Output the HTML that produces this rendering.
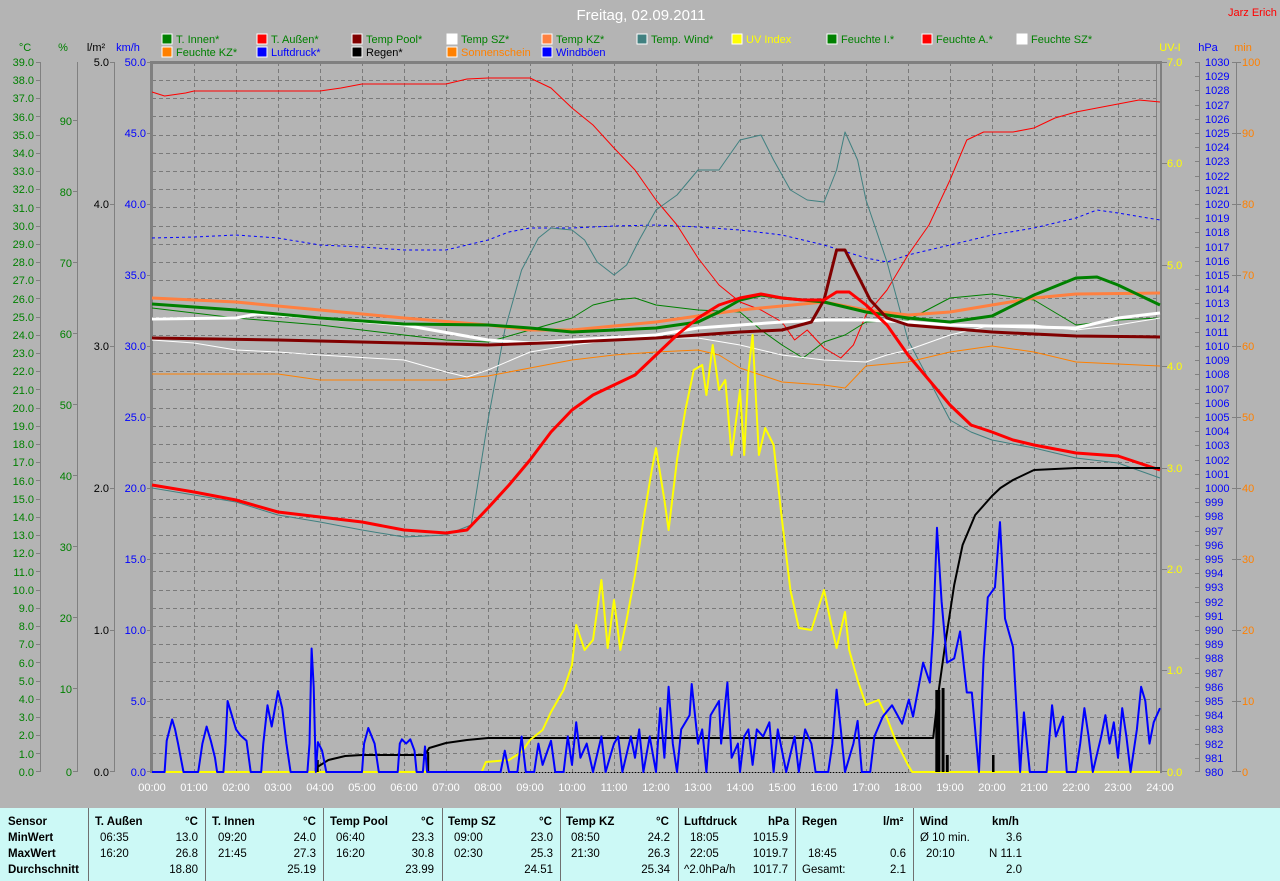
<!DOCTYPE html>
<html><head><meta charset="utf-8"><style>
html,body{margin:0;padding:0;background:#b4b4b4;width:1280px;height:881px;overflow:hidden}
svg{display:block;font-family:"Liberation Sans",sans-serif}
.tb{position:absolute;left:0;top:808px;width:1280px;height:73px;background:#ccf9f6;font-family:"Liberation Sans",sans-serif;font-size:11.5px;color:#000}
.tb div{position:absolute;white-space:nowrap}
.sep{position:absolute;top:0;width:1px;height:73px;background:#707070}
.b{font-weight:bold}
</style></head><body>
<svg width="1280" height="808" xmlns="http://www.w3.org/2000/svg">
<text x="641" y="20" fill="#fff" font-size="15" text-anchor="middle">Freitag, 02.09.2011</text>
<text x="1228" y="16" fill="#f00" font-size="11">Jarz Erich</text>
<g font-size="11">
<rect x="162" y="34" width="10" height="10" fill="#008000" stroke="#fff"/><text x="176" y="43" fill="#008000">T. Innen*</text>
<rect x="257" y="34" width="10" height="10" fill="#f00" stroke="#fff"/><text x="271" y="43" fill="#008000">T. Außen*</text>
<rect x="352" y="34" width="10" height="10" fill="#800000" stroke="#fff"/><text x="366" y="43" fill="#008000">Temp Pool*</text>
<rect x="447" y="34" width="10" height="10" fill="#fff" stroke="#fff"/><text x="461" y="43" fill="#008000">Temp SZ*</text>
<rect x="542" y="34" width="10" height="10" fill="#ff8040" stroke="#fff"/><text x="556" y="43" fill="#008000">Temp KZ*</text>
<rect x="637" y="34" width="10" height="10" fill="#408080" stroke="#fff"/><text x="651" y="43" fill="#008000">Temp. Wind*</text>
<rect x="732" y="34" width="10" height="10" fill="#ff0" stroke="#fff"/><text x="746" y="43" fill="#ff0">UV Index</text>
<rect x="827" y="34" width="10" height="10" fill="#008000" stroke="#fff"/><text x="841" y="43" fill="#008000">Feuchte I.*</text>
<rect x="922" y="34" width="10" height="10" fill="#f00" stroke="#fff"/><text x="936" y="43" fill="#008000">Feuchte A.*</text>
<rect x="1017" y="34" width="10" height="10" fill="#fff" stroke="#fff"/><text x="1031" y="43" fill="#008000">Feuchte SZ*</text>
<rect x="162" y="47" width="10" height="10" fill="#ff8000" stroke="#fff"/><text x="176" y="56" fill="#008000">Feuchte KZ*</text>
<rect x="257" y="47" width="10" height="10" fill="#00f" stroke="#fff"/><text x="271" y="56" fill="#00f">Luftdruck*</text>
<rect x="352" y="47" width="10" height="10" fill="#000" stroke="#fff"/><text x="366" y="56" fill="#000">Regen*</text>
<rect x="447" y="47" width="10" height="10" fill="#ff8000" stroke="#fff"/><text x="461" y="56" fill="#ff8000">Sonnenschein</text>
<rect x="542" y="47" width="10" height="10" fill="#00f" stroke="#fff"/><text x="556" y="56" fill="#00f">Windböen</text>
</g>
<g font-size="11">
<text x="25" y="51" fill="#008000" text-anchor="middle">°C</text>
<text x="63" y="51" fill="#008000" text-anchor="middle">%</text>
<text x="96" y="51" fill="#000" text-anchor="middle">l/m²</text>
<text x="128" y="51" fill="#00f" text-anchor="middle">km/h</text>
<text x="1170" y="51" fill="#ff0" text-anchor="middle">UV-I</text>
<text x="1208" y="51" fill="#00f" text-anchor="middle">hPa</text>
<text x="1243" y="51" fill="#ff8000" text-anchor="middle">min</text>
</g>
<g stroke="#808080" stroke-width="1">
<line x1="40.5" y1="62" x2="40.5" y2="772"/>
<line x1="77.5" y1="62" x2="77.5" y2="772"/>
<line x1="114.5" y1="62" x2="114.5" y2="772"/>
<line x1="1199.5" y1="62" x2="1199.5" y2="772"/>
<line x1="1236.5" y1="62" x2="1236.5" y2="772"/>
</g>
<g stroke="#7a7a7a" stroke-dasharray="4,3" stroke-width="1">
<path d="M152 80.5H1157M152 98.5H1157M152 116.5H1157M152 135.5H1157M152 153.5H1157M152 171.5H1157M152 189.5H1157M152 207.5H1157M152 226.5H1157M152 244.5H1157M152 262.5H1157M152 280.5H1157M152 298.5H1157M152 317.5H1157M152 335.5H1157M152 353.5H1157M152 371.5H1157M152 389.5H1157M152 408.5H1157M152 426.5H1157M152 444.5H1157M152 462.5H1157M152 480.5H1157M152 499.5H1157M152 517.5H1157M152 535.5H1157M152 553.5H1157M152 571.5H1157M152 590.5H1157M152 608.5H1157M152 626.5H1157M152 644.5H1157M152 662.5H1157M152 681.5H1157M152 699.5H1157M152 717.5H1157M152 735.5H1157M152 753.5H1157"/>
<path d="M194.5 62V772M236.5 62V772M278.5 62V772M320.5 62V772M362.5 62V772M404.5 62V772M446.5 62V772M488.5 62V772M530.5 62V772M572.5 62V772M614.5 62V772M656.5 62V772M698.5 62V772M740.5 62V772M782.5 62V772M824.5 62V772M866.5 62V772M908.5 62V772M950.5 62V772M992.5 62V772M1034.5 62V772M1076.5 62V772M1118.5 62V772"/>
</g>
<rect x="150" y="61" width="3" height="712" fill="#808080"/>
<rect x="150" y="61" width="1012" height="3" fill="#808080"/>
<rect x="1156" y="62" width="1" height="711" fill="#808080"/>
<rect x="1160" y="62" width="2" height="711" fill="#808080"/>
<line x1="150" y1="772.5" x2="1162" y2="772.5" stroke="#808080"/>
<g font-size="11" fill="#008000" text-anchor="end">
<text x="34" y="66">39.0</text><text x="34" y="84">38.0</text><text x="34" y="102">37.0</text><text x="34" y="121">36.0</text><text x="34" y="139">35.0</text><text x="34" y="157">34.0</text><text x="34" y="175">33.0</text><text x="34" y="193">32.0</text><text x="34" y="212">31.0</text><text x="34" y="230">30.0</text><text x="34" y="248">29.0</text><text x="34" y="266">28.0</text><text x="34" y="284">27.0</text><text x="34" y="303">26.0</text><text x="34" y="321">25.0</text><text x="34" y="339">24.0</text><text x="34" y="357">23.0</text><text x="34" y="375">22.0</text><text x="34" y="394">21.0</text><text x="34" y="412">20.0</text><text x="34" y="430">19.0</text><text x="34" y="448">18.0</text><text x="34" y="466">17.0</text><text x="34" y="485">16.0</text><text x="34" y="503">15.0</text><text x="34" y="521">14.0</text><text x="34" y="539">13.0</text><text x="34" y="557">12.0</text><text x="34" y="576">11.0</text><text x="34" y="594">10.0</text><text x="34" y="612">9.0</text><text x="34" y="630">8.0</text><text x="34" y="648">7.0</text><text x="34" y="667">6.0</text><text x="34" y="685">5.0</text><text x="34" y="703">4.0</text><text x="34" y="721">3.0</text><text x="34" y="739">2.0</text><text x="34" y="758">1.0</text><text x="34" y="776">0.0</text>
<text x="72" y="125">90</text><text x="72" y="196">80</text><text x="72" y="267">70</text><text x="72" y="338">60</text><text x="72" y="409">50</text><text x="72" y="480">40</text><text x="72" y="551">30</text><text x="72" y="622">20</text><text x="72" y="693">10</text><text x="72" y="776">0</text>
</g>
<g font-size="11" fill="#000" text-anchor="end">
<text x="109" y="66">5.0</text><text x="109" y="208">4.0</text><text x="109" y="350">3.0</text><text x="109" y="492">2.0</text><text x="109" y="634">1.0</text><text x="109" y="776">0.0</text>
</g>
<g font-size="11" fill="#00f" text-anchor="end">
<text x="146" y="66">50.0</text><text x="146" y="137">45.0</text><text x="146" y="208">40.0</text><text x="146" y="279">35.0</text><text x="146" y="350">30.0</text><text x="146" y="421">25.0</text><text x="146" y="492">20.0</text><text x="146" y="563">15.0</text><text x="146" y="634">10.0</text><text x="146" y="705">5.0</text><text x="146" y="776">0.0</text>
</g>
<g stroke="#808080">
<path d="M36 62.5h5M36 80.5h5M36 98.5h5M36 116.5h5M36 135.5h5M36 153.5h5M36 171.5h5M36 189.5h5M36 207.5h5M36 226.5h5M36 244.5h5M36 262.5h5M36 280.5h5M36 298.5h5M36 317.5h5M36 335.5h5M36 353.5h5M36 371.5h5M36 389.5h5M36 408.5h5M36 426.5h5M36 444.5h5M36 462.5h5M36 480.5h5M36 499.5h5M36 517.5h5M36 535.5h5M36 553.5h5M36 571.5h5M36 590.5h5M36 608.5h5M36 626.5h5M36 644.5h5M36 662.5h5M36 681.5h5M36 699.5h5M36 717.5h5M36 735.5h5M36 753.5h5M36 771.5h5"/>
<path d="M73 120.5h5M73 191.5h5M73 262.5h5M73 333.5h5M73 404.5h5M73 475.5h5M73 546.5h5M73 617.5h5M73 688.5h5M73 771.5h5"/>
<path d="M110 62.5h5M110 204.5h5M110 346.5h5M110 488.5h5M110 630.5h5M110 771.5h5"/>
<path d="M147 62.5h4M147 133.5h4M147 204.5h4M147 275.5h4M147 346.5h4M147 417.5h4M147 488.5h4M147 559.5h4M147 630.5h4M147 701.5h4M147 771.5h4"/>
<path d="M1162 62.5h5M1162 163.5h5M1162 265.5h5M1162 366.5h5M1162 468.5h5M1162 569.5h5M1162 670.5h5M1162 771.5h5"/>
<path d="M1232 62.5h9M1232 133.5h9M1232 204.5h9M1232 275.5h9M1232 346.5h9M1232 417.5h9M1232 488.5h9M1232 559.5h9M1232 630.5h9M1232 701.5h9M1232 771.5h9"/>
</g>
<g font-size="11" fill="#ff0">
<text x="1167" y="66">7.0</text><text x="1167" y="167">6.0</text><text x="1167" y="269">5.0</text><text x="1167" y="370">4.0</text><text x="1167" y="472">3.0</text><text x="1167" y="573">2.0</text><text x="1167" y="674">1.0</text><text x="1167" y="776">0.0</text>
</g>
<g font-size="11" fill="#ff8000">
<text x="1242" y="66">100</text><text x="1242" y="137">90</text><text x="1242" y="208">80</text><text x="1242" y="279">70</text><text x="1242" y="350">60</text><text x="1242" y="421">50</text><text x="1242" y="492">40</text><text x="1242" y="563">30</text><text x="1242" y="634">20</text><text x="1242" y="705">10</text><text x="1242" y="776">0</text>
</g>
<g font-size="11" fill="#00f">
<text x="1205" y="66">1030</text><text x="1205" y="80">1029</text><text x="1205" y="94">1028</text><text x="1205" y="109">1027</text><text x="1205" y="123">1026</text><text x="1205" y="137">1025</text><text x="1205" y="151">1024</text><text x="1205" y="165">1023</text><text x="1205" y="180">1022</text><text x="1205" y="194">1021</text><text x="1205" y="208">1020</text><text x="1205" y="222">1019</text><text x="1205" y="236">1018</text><text x="1205" y="251">1017</text><text x="1205" y="265">1016</text><text x="1205" y="279">1015</text><text x="1205" y="293">1014</text><text x="1205" y="307">1013</text><text x="1205" y="322">1012</text><text x="1205" y="336">1011</text><text x="1205" y="350">1010</text><text x="1205" y="364">1009</text><text x="1205" y="378">1008</text><text x="1205" y="393">1007</text><text x="1205" y="407">1006</text><text x="1205" y="421">1005</text><text x="1205" y="435">1004</text><text x="1205" y="449">1003</text><text x="1205" y="464">1002</text><text x="1205" y="478">1001</text><text x="1205" y="492">1000</text><text x="1205" y="506">999</text><text x="1205" y="520">998</text><text x="1205" y="535">997</text><text x="1205" y="549">996</text><text x="1205" y="563">995</text><text x="1205" y="577">994</text><text x="1205" y="591">993</text><text x="1205" y="606">992</text><text x="1205" y="620">991</text><text x="1205" y="634">990</text><text x="1205" y="648">989</text><text x="1205" y="662">988</text><text x="1205" y="677">987</text><text x="1205" y="691">986</text><text x="1205" y="705">985</text><text x="1205" y="719">984</text><text x="1205" y="733">983</text><text x="1205" y="748">982</text><text x="1205" y="762">981</text><text x="1205" y="776">980</text>
</g>
<path stroke="#808080" d="M1195 62.5h4M1195 76.5h4M1195 90.5h4M1195 105.5h4M1195 119.5h4M1195 133.5h4M1195 147.5h4M1195 161.5h4M1195 176.5h4M1195 190.5h4M1195 204.5h4M1195 218.5h4M1195 232.5h4M1195 247.5h4M1195 261.5h4M1195 275.5h4M1195 289.5h4M1195 303.5h4M1195 318.5h4M1195 332.5h4M1195 346.5h4M1195 360.5h4M1195 374.5h4M1195 389.5h4M1195 403.5h4M1195 417.5h4M1195 431.5h4M1195 445.5h4M1195 460.5h4M1195 474.5h4M1195 488.5h4M1195 502.5h4M1195 516.5h4M1195 531.5h4M1195 545.5h4M1195 559.5h4M1195 573.5h4M1195 587.5h4M1195 602.5h4M1195 616.5h4M1195 630.5h4M1195 644.5h4M1195 658.5h4M1195 673.5h4M1195 687.5h4M1195 701.5h4M1195 715.5h4M1195 729.5h4M1195 744.5h4M1195 758.5h4M1195 771.5h4"/>
<g font-size="11" fill="#fff" text-anchor="middle">
<text x="152" y="791">00:00</text><text x="194" y="791">01:00</text><text x="236" y="791">02:00</text><text x="278" y="791">03:00</text><text x="320" y="791">04:00</text><text x="362" y="791">05:00</text><text x="404" y="791">06:00</text><text x="446" y="791">07:00</text><text x="488" y="791">08:00</text><text x="530" y="791">09:00</text><text x="572" y="791">10:00</text><text x="614" y="791">11:00</text><text x="656" y="791">12:00</text><text x="698" y="791">13:00</text><text x="740" y="791">14:00</text><text x="782" y="791">15:00</text><text x="824" y="791">16:00</text><text x="866" y="791">17:00</text><text x="908" y="791">18:00</text><text x="950" y="791">19:00</text><text x="992" y="791">20:00</text><text x="1034" y="791">21:00</text><text x="1076" y="791">22:00</text><text x="1118" y="791">23:00</text><text x="1160" y="791">24:00</text>
</g>
<g transform="translate(152,0) scale(42,1)" fill="none" stroke-linejoin="round">
<polyline vector-effect="non-scaling-stroke" stroke="#00f" stroke-width="1" stroke-dasharray="3,3" points="0,238 1,237 2,235 3,238 4,245 5,247 6,250 7,250 8,240 8.5,232 9,228 10,228 11,226 12,225 13,227 14,230 15,235 16,245 17,258 17.5,262 18,255 19,245 20,235 21,228 22,218 22.5,210 23,213 24,220"/>
<polyline vector-effect="non-scaling-stroke" stroke="#f00" stroke-width="1" points="0,92 0.3,96 0.8,93 1,91 2,91 3,91 4,91 4.5,88 5,84 6,84 7,84 7.5,79 8,78 9,78 9.5,88 10,108 10.5,125 11,148 11.5,170 12,200 12.5,225 13,258 13.5,285 14,302 14.5,310 15,322 15.3,340 15.6,330 16,348 16.4,358 16.7,345 17,315 17.5,290 18,255 18.5,225 19,180 19.4,140 19.8,132 20.5,132 21,128 21.5,118 22,112 22.5,108 23,104 23.5,100 24,102"/>
<polyline vector-effect="non-scaling-stroke" stroke="#408080" stroke-width="1" points="0,488 1,495 2,502 3,515 4,522 5,530 6,537 7,535 7.6,525 8,420 8.4,330 8.8,270 9.2,238 9.5,228 10,230 10.3,240 10.6,262 11,275 11.3,265 11.6,240 12,210 12.5,195 13,170 13.5,170 14,140 14.5,135 14.8,160 15.2,190 15.6,200 16,202 16.3,170 16.5,132 16.8,160 17,200 17.5,262 18,340 18.5,380 19,420 19.5,432 20,440 21,448 22,458 23,463 24,478"/>
<polyline vector-effect="non-scaling-stroke" stroke="#ff8000" stroke-width="1" points="0,374 3,374 4,380 7,380 8,376 9,368 10,360 11,355 12,352 13,350 13.5,355 14,368 15,382 16,385 16.5,388 17,366 18,362 19,352 20,346 21,352 22,362 24,366"/>
<polyline vector-effect="non-scaling-stroke" stroke="#008000" stroke-width="1" points="0,308 2,318 4,325 6,335 7,340 8,342 9,330 10,318 10.5,305 11,300 11.5,298 12,305 13,310 14,312 14.5,330 15,345 15.5,358 16,342 16.5,335 17,322 18,320 19,298 20,294 21,300 22,325 23,320 24,318"/>
<polyline vector-effect="non-scaling-stroke" stroke="#fff" stroke-width="1" points="0,340 1,343 2,350 3,352 4,355 6,360 7,372 7.5,377 8,370 9,352 10,345 11,340 12,338 13,338 14,345 15,355 16,360 17,362 17.5,355 18,350 19,335 20,325 21,325 22,330 23,325 24,318"/>
<polyline vector-effect="non-scaling-stroke" stroke="#ff8040" stroke-width="3" points="0,298 2,302 4,310 6,318 8,325 9,330 10,330 12,322 14,310 16,302 17,310 18,315 19,312 20,305 21,298 22,294 24,293"/>
<polyline vector-effect="non-scaling-stroke" stroke="#fff" stroke-width="3" points="0,319 2,318 2.5,314 3,315 4,318 6,325 8,340 9,343 10,340 12,335 13,328 14,325 15,322 16,320 17,320 18,322 19,325 20,326 22,328 23,318 24,313"/>
<polyline vector-effect="non-scaling-stroke" stroke="#008000" stroke-width="3" points="0,304 2,310 4,318 6,324 8,325 9,328 10,332 12,328 13,322 13.5,312 14,300 14.5,295 15,298 16,302 17,312 18,318 19,322 20,316 21,295 22,278 22.5,277 23,285 24,305"/>
<polyline vector-effect="non-scaling-stroke" stroke="#800000" stroke-width="3" points="0,338 3,340 6,343 8,345 10,342 12,338 14,332 15,330 15.7,322 16,300 16.3,250 16.5,250 16.8,275 17.1,300 17.5,318 18,325 20,332 22,336 24,337"/>
<polyline vector-effect="non-scaling-stroke" stroke="#f00" stroke-width="3" points="0,485 1,492 2,500 3,512 4,517 5,522 6,530 7,533 7.5,530 8,508 8.5,485 9,460 9.5,432 10,410 10.5,395 11,385 11.5,375 12,355 12.5,335 13,318 13.5,305 14,298 14.5,294 15,298 15.5,300 16,300 16.3,292 16.6,292 17,305 17.5,325 18,355 18.5,380 19,405 19.5,425 20,432 20.5,440 21,445 22,453 23,456 24,470"/>
<polyline vector-effect="non-scaling-stroke" stroke="#000" stroke-width="2" points="0,772 3.9,772 3.9,768 4.2,760 4.6,756 5,755 6.5,755 6.6,748 7,743 7.5,740 8,738 18.6,738 18.7,700 18.9,640 19.1,585 19.3,545 19.6,515 20,496 20.2,488 20.5,480 21,470 22,468 24,468"/>
<polyline vector-effect="non-scaling-stroke" stroke="#ff0" stroke-width="2" points="0,772 7.85,772 7.95,762 8.5,760 8.8,752 9,740 9.3,730 9.5,712 9.8,690 10,665 10.1,625 10.3,650 10.5,640 10.7,580 10.85,648 11,600 11.15,650 11.3,620 11.5,575 11.7,520 11.9,470 12,448 12.2,500 12.3,530 12.5,460 12.7,410 12.9,370 13.1,365 13.2,395 13.35,345 13.5,390 13.65,380 13.8,455 14,390 14.1,455 14.2,372 14.3,335 14.45,455 14.6,428 14.8,445 15,520 15.2,590 15.4,628 15.7,630 16,590 16.15,620 16.3,648 16.5,612 16.6,650 16.8,680 17,705 17.3,700 17.5,718 17.7,740 18,765 18.1,772 24,772"/>
<line vector-effect="non-scaling-stroke" x1="8" y1="772.5" x2="18" y2="772.5" stroke="#000" stroke-dasharray="1,2"/>
<g fill="#000" stroke="none">
<rect x="18.65" y="690" width="0.12" height="82"/><rect x="18.8" y="688" width="0.07" height="84"/><rect x="18.9" y="755" width="0.07" height="17"/><rect x="20.0" y="755" width="0.06" height="17"/><rect x="3.9" y="760" width="0.07" height="12"/><rect x="6.55" y="752" width="0.05" height="20"/>
</g>
</g>
<g transform="translate(152,772) scale(42,-14.2)" fill="none">
<polyline vector-effect="non-scaling-stroke" stroke="#00f" stroke-width="2" stroke-linejoin="round" points="0,0 0.3,0 0.35,2.2 0.42,3 0.48,3.7 0.55,3 0.62,2 0.75,0 1.1,0 1.2,2 1.3,3.2 1.4,2.2 1.5,1 1.55,0 1.7,0 1.75,2 1.8,5 1.9,4 2.0,3 2.1,2.6 2.25,2.2 2.35,0 2.6,0 2.65,2 2.75,4.7 2.85,3.2 3.0,5.7 3.1,4.5 3.2,2 3.3,0 3.7,0 3.75,2 3.8,8.7 3.85,6 3.9,0 3.95,2.1 4.05,1.5 4.15,0 5.0,0 5.05,2 5.15,3.1 5.3,2 5.4,0 5.85,0 5.9,2 5.95,2.3 6.05,2 6.15,2.3 6.25,1.5 6.3,0 6.45,0 6.5,1.8 6.55,0 7,0 8.3,0 8.4,1.5 8.5,0 8.7,0 8.8,2.5 8.9,0 9.1,0 9.2,2 9.3,0.5 9.5,2.2 9.6,0 9.8,0 9.9,2.5 10,0.5 10.1,3.5 10.2,1 10.35,2 10.5,0 10.7,2.5 10.8,0 11,2 11.1,2.5 11.2,0 11.4,2.5 11.5,1 11.6,3 11.7,0 11.85,2.5 12,0 12.1,4.5 12.2,1 12.3,6 12.4,2 12.5,0 12.6,3 12.8,4 12.85,6.2 13,2 13.1,3 13.2,0 13.3,4 13.5,5 13.55,2 13.7,6.3 13.8,1 13.95,2 14.0,0 14.1,2.5 14.2,3 14.3,0.5 14.4,3 14.55,2.5 14.7,3.5 14.8,0 14.9,3 15.1,0 15.3,2.5 15.4,0 15.55,3 15.7,2 15.8,0 16.1,0 16.2,2 16.3,5.8 16.4,3 16.5,0 16.7,2 16.8,3.6 16.9,0 17.1,0 17.2,2.5 17.4,3.9 17.62,4.7 17.86,3.4 18.02,5.1 18.12,3.9 18.36,7.7 18.52,6.3 18.6,10 18.69,17.2 18.8,12 18.93,7.7 19.1,8 19.24,9.9 19.4,5.6 19.52,5.6 19.69,0 19.8,8 19.9,12.3 20.07,13 20.19,17.6 20.31,10.8 20.5,8.8 20.67,0 20.76,4.2 20.9,0 21.3,0 21.43,4.7 21.52,2.5 21.69,3.9 21.78,0 22.0,0 22.1,2 22.2,4.5 22.3,2.5 22.4,0 22.6,2.5 22.7,4 22.8,2 22.9,3.5 23.0,1 23.1,4.5 23.2,2.5 23.3,0 23.45,3 23.55,6 23.65,5 23.75,2 23.85,3.5 24,4.5"/>
</g>
</svg>
<div class="tb">
<div class="sep" style="left:88px"></div><div class="sep" style="left:205px"></div><div class="sep" style="left:323px"></div><div class="sep" style="left:442px"></div><div class="sep" style="left:560px"></div><div class="sep" style="left:678px"></div><div class="sep" style="left:795px"></div><div class="sep" style="left:913px"></div>
<div class="b" style="left:8px;top:8px">Sensor</div><div class="b" style="left:8px;top:24px">MinWert</div><div class="b" style="left:8px;top:40px">MaxWert</div><div class="b" style="left:8px;top:56px">Durchschnitt</div>

<div class="b" style="left:95px;top:8px">T. Außen</div><div class="b" style="left:185px;top:8px">°C</div>
<div style="left:100px;top:24px">06:35</div><div style="right:1082px;top:24px">13.0</div>
<div style="left:100px;top:40px">16:20</div><div style="right:1082px;top:40px">26.8</div>
<div style="right:1082px;top:56px">18.80</div>

<div class="b" style="left:212px;top:8px">T. Innen</div><div class="b" style="left:303px;top:8px">°C</div>
<div style="left:218px;top:24px">09:20</div><div style="right:964px;top:24px">24.0</div>
<div style="left:218px;top:40px">21:45</div><div style="right:964px;top:40px">27.3</div>
<div style="right:964px;top:56px">25.19</div>

<div class="b" style="left:330px;top:8px">Temp Pool</div><div class="b" style="left:421px;top:8px">°C</div>
<div style="left:336px;top:24px">06:40</div><div style="right:846px;top:24px">23.3</div>
<div style="left:336px;top:40px">16:20</div><div style="right:846px;top:40px">30.8</div>
<div style="right:846px;top:56px">23.99</div>

<div class="b" style="left:448px;top:8px">Temp SZ</div><div class="b" style="left:539px;top:8px">°C</div>
<div style="left:454px;top:24px">09:00</div><div style="right:727px;top:24px">23.0</div>
<div style="left:454px;top:40px">02:30</div><div style="right:727px;top:40px">25.3</div>
<div style="right:727px;top:56px">24.51</div>

<div class="b" style="left:566px;top:8px">Temp KZ</div><div class="b" style="left:656px;top:8px">°C</div>
<div style="left:571px;top:24px">08:50</div><div style="right:610px;top:24px">24.2</div>
<div style="left:571px;top:40px">21:30</div><div style="right:610px;top:40px">26.3</div>
<div style="right:610px;top:56px">25.34</div>

<div class="b" style="left:684px;top:8px">Luftdruck</div><div class="b" style="left:768px;top:8px">hPa</div>
<div style="left:690px;top:24px">18:05</div><div style="right:492px;top:24px">1015.9</div>
<div style="left:690px;top:40px">22:05</div><div style="right:492px;top:40px">1019.7</div>
<div style="left:684px;top:56px">^2.0hPa/h</div><div style="right:492px;top:56px">1017.7</div>

<div class="b" style="left:802px;top:8px">Regen</div><div class="b" style="left:883px;top:8px">l/m²</div>
<div style="left:808px;top:40px">18:45</div><div style="right:374px;top:40px">0.6</div>
<div style="left:802px;top:56px">Gesamt:</div><div style="right:374px;top:56px">2.1</div>

<div class="b" style="left:920px;top:8px">Wind</div><div class="b" style="left:992px;top:8px">km/h</div>
<div style="left:920px;top:24px">Ø 10 min.</div><div style="right:258px;top:24px">3.6</div>
<div style="left:926px;top:40px">20:10</div><div style="right:258px;top:40px">N 11.1</div>
<div style="right:258px;top:56px">2.0</div>
</div>
</body></html>
